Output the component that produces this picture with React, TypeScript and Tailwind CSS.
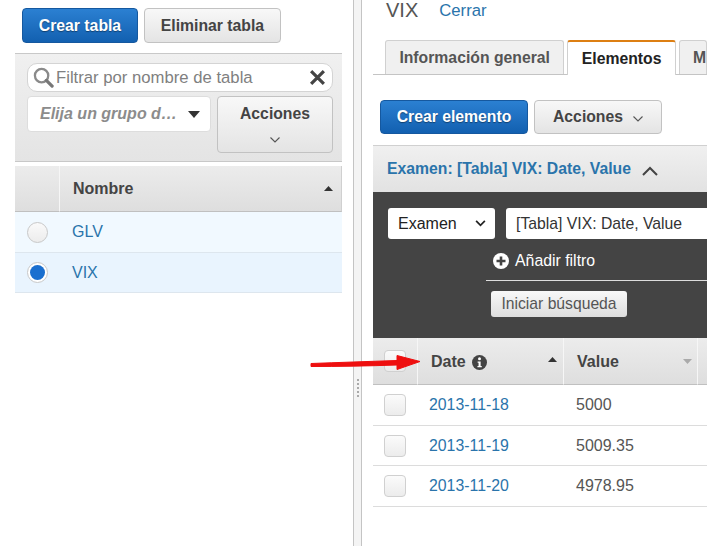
import React from "react";

function Chevron({ className = "" }: { className?: string }) {
  return (
    <svg viewBox="0 0 10 6" className={className} fill="none" stroke="currentColor" strokeWidth="1.1">
      <path d="M0.5 0.5 L5 5 L9.5 0.5" />
    </svg>
  );
}

function Caret({ down = false, color = "#333" }: { down?: boolean; color?: string }) {
  return (
    <svg viewBox="0 0 9 5" className="w-[9px] h-[5px]" fill={color}>
      <path d={down ? "M0 0 L9 0 L4.5 5 Z" : "M4.5 0 L9 5 L0 5 Z"} />
    </svg>
  );
}

const blueBtn =
  "rounded-[4px] border border-[#15589f] bg-gradient-to-b from-[#2b80d2] to-[#1260b0] text-white font-bold text-[15.75px] [text-shadow:0_1px_1px_rgba(0,0,0,0.4)] flex items-center justify-center";
const grayBtn =
  "rounded-[4px] border border-[#c2c2c2] bg-gradient-to-b from-[#f8f8f8] to-[#e4e4e4] text-[#444] font-bold text-[15.75px] flex items-center justify-center";
const headCell = "bg-gradient-to-b from-[#ececec] to-[#dedede] border-b border-[#c0c0c0] flex items-center";

function Box() {
  return <div className="w-[22px] h-[22px] rounded-[4px] border border-[#d0d0d0] bg-gradient-to-b from-[#fbfbfb] to-[#ececec]" />;
}

function Row({ date, value }: { date: string; value: string }) {
  return (
    <div className="h-[40.7px] border-b border-[#dcdcdc] flex items-center text-[16px]">
      <div className="w-[45px] pl-[11px] flex items-center"><Box /></div>
      <div className="w-[146px] pl-[11px] text-[15.85px] text-[#2a74ab]">{date}</div>
      <div className="pl-[12px] text-[#555]">{value}</div>
    </div>
  );
}

export default function App() {
  return (
    <div className="relative w-[707px] h-[546px] overflow-hidden bg-white flex font-['Liberation_Sans',Arial,sans-serif]">
      {/* Left */}
      <div className="w-[353px] shrink-0 pl-[15px] pr-[11px] pt-[8px]">
        <div className="flex gap-[6px] pl-[7px]">
          <button className={`${blueBtn} w-[116px] h-[35px]`}>Crear tabla</button>
          <button className={`${grayBtn} w-[137px] h-[35px]`}>Eliminar tabla</button>
        </div>
        <div className="mt-[10px] h-[109px] border-t border-b border-[#c8c8c8] bg-gradient-to-b from-[#f0f0f0] to-[#e4e4e4] pl-[12px] pr-[9px] pt-[9px]">
          <div className="h-[29px] rounded-[10px] border border-[#d4d4d4] bg-white flex items-center pl-[5px] pr-[6px]">
            <svg viewBox="0 0 22 22" className="w-[21px] h-[21px] shrink-0" fill="none">
              <circle cx="9" cy="9" r="7" stroke="#8a8a8a" strokeWidth="2.4" />
              <path d="M14 14 L20 20" stroke="#777" strokeWidth="3.4" strokeLinecap="round" />
            </svg>
            <span className="ml-[2px] text-[16.7px] text-[#808080] flex-1 whitespace-nowrap">Filtrar por nombre de tabla</span>
            <svg viewBox="0 0 16 16" className="w-[17px] h-[17px]" stroke="#444" strokeWidth="3" fill="none">
              <path d="M2 2 L14 14 M14 2 L2 14" />
            </svg>
          </div>
          <div className="mt-[4px] flex gap-[6px] items-start">
            <div className="w-[184px] h-[36px] rounded-[4px] border border-[#ddd] bg-white flex items-center pl-[12px] pr-[10px] justify-between">
              <span className="text-[16px] italic font-bold text-[#8c8c8c] whitespace-nowrap">Elija un grupo d…</span>
              <svg viewBox="0 0 12 7" className="w-[12px] h-[7px]" fill="#333"><path d="M0 0 H12 L6 7 Z" /></svg>
            </div>
            <div className={`${grayBtn} w-[116px] h-[57px] flex-col pb-[2px]`}>
              <span className="-mt-[2px]">Acciones</span>
              <Chevron className="w-[10px] h-[6px] mt-[11px] text-[#555]" />
            </div>
          </div>
        </div>
        <div className="mt-[4px] flex">
          <div className={`${headCell} h-[46px] w-[45px] border-r border-r-[#f6f6f6]`} />
          <div className={`${headCell} h-[46px] flex-1 pl-[13px] pr-[8px] justify-between border-r border-r-[#d0d0d0]`}>
            <span className="font-bold text-[16px] text-[#444]">Nombre</span>
            <Caret />
          </div>
        </div>
        <div className="h-[41px] bg-[#f1f9ff] border-b border-[#dde6ee] flex items-center text-[16px] text-[#2a74ab]">
          <div className="w-[45px] pl-[12px]">
            <div className="w-[21px] h-[21px] rounded-full border border-[#c8c8c8] bg-gradient-to-b from-[#fafafa] to-[#ececec]" />
          </div>
          <span className="pl-[12px] -mt-[1px]">GLV</span>
        </div>
        <div className="h-[40px] bg-[#e9f4fe] border-b border-[#dde6ee] flex items-center text-[16px] text-[#2a74ab]">
          <div className="w-[45px] pl-[12px]">
            <div className="w-[21px] h-[21px] rounded-full border border-[#c8c8c8] bg-white flex items-center justify-center">
              <div className="w-[15px] h-[15px] rounded-full bg-[#1a6fcf]" />
            </div>
          </div>
          <span className="pl-[12px]">VIX</span>
        </div>
      </div>

      {/* Splitter */}
      <div className="w-[9px] shrink-0 border-l border-r border-[#c4c4c4] bg-[#f4f4f4] flex flex-col items-center pt-[379px] gap-[2px]">
        {[0, 1, 2, 3, 4].map((i) => (
          <div key={i} className="w-[2px] h-[2px] bg-[#aaa]" />
        ))}
      </div>

      {/* Right */}
      <div className="flex-1 min-w-0 pl-[11px]">
        <div className="h-[41px] pl-[13px] flex items-start gap-[21px] -mt-[1px]">
          <span className="text-[20px] leading-[22px] text-[#555]">VIX</span>
          <span className="text-[16.7px] leading-[22px] mt-[1px] text-[#2a74ab]">Cerrar</span>
        </div>
        <div className="h-[35px] border-b border-[#c4c4c4] pl-[12px] flex items-end overflow-visible">
          <div className="w-[180px] h-[34px] rounded-t-[3px] border border-b-0 border-[#d0d0d0] bg-[#f0f0f0] flex items-center justify-center font-bold text-[15.75px] text-[#555] whitespace-nowrap">Información general</div>
          <div className="ml-[3px] w-[109px] h-[35px] -mb-[1px] rounded-t-[3px] border-x border-[#d0d0d0] border-t-2 border-t-[#dd7f13] bg-white flex items-center justify-center font-bold text-[15.75px] text-[#222]">Elementos</div>
          <div className="ml-[3px] flex-1 h-[34px] rounded-t-[3px] border border-b-0 border-[#d0d0d0] bg-[#f0f0f0] flex items-center pl-[13px] font-bold text-[15.75px] text-[#555]">M</div>
        </div>
        <div className="mt-[25px] pl-[7px] flex gap-[6px]">
          <button className={`${blueBtn} w-[148px] h-[34px]`}>Crear elemento</button>
          <button className={`${grayBtn} w-[128px] h-[34px] gap-[10px]`}>
            <span>Acciones</span>
            <Chevron className="w-[10px] h-[6px] mt-[3px] text-[#555]" />
          </button>
        </div>
        <div className="mt-[11px] h-[47px] border-t border-[#d0d0d0] bg-gradient-to-b from-[#f0f0f0] to-[#e2e2e2] pl-[14px] flex items-center gap-[11px]">
          <span className="font-bold text-[15.75px] text-[#2a74ab] whitespace-nowrap">Examen: [Tabla] VIX: Date, Value</span>
          <svg viewBox="0 0 16 10" className="w-[16px] h-[10px] mt-[4px]" fill="none" stroke="#444" strokeWidth="2"><path d="M1 9 L8 2 L15 9" /></svg>
        </div>
        <div className="h-[146px] bg-[#444444] pt-[16px]">
          <div className="flex pl-[15px] gap-[11px]">
            <div className="w-[107px] h-[31px] rounded-[3px] bg-white flex items-center justify-between pl-[10px] pr-[9px] text-[16px] text-[#222]">
              <span>Examen</span>
              <svg viewBox="0 0 12 8" className="w-[11px] h-[7px]" fill="none" stroke="#222" strokeWidth="2"><path d="M1 1 L6 6 L11 1" /></svg>
            </div>
            <div className="flex-1 h-[31px] rounded-l-[3px] bg-white flex items-center pl-[10px] text-[15.75px] text-[#333] whitespace-nowrap">[Tabla] VIX: Date, Value</div>
          </div>
          <div className="ml-[113px] h-[42px] border-b border-[#ddd] flex items-center pl-[7px] gap-[6px] text-white text-[15.85px]">
            <svg viewBox="0 0 16 16" className="w-[16px] h-[16px] mt-[3px]">
              <circle cx="8" cy="8" r="8" fill="#fff" />
              <path d="M8 3.5 V12.5 M3.5 8 H12.5" stroke="#444" strokeWidth="2.6" />
            </svg>
            <span className="mt-[3px]">Añadir filtro</span>
          </div>
          <div className="mt-[10px] ml-[118px] w-[136px] h-[26px] rounded-[3px] bg-gradient-to-b from-[#f8f8f8] to-[#dedede] flex items-center justify-center text-[15.7px] text-[#555]">Iniciar búsqueda</div>
        </div>
        <div className="flex">
          <div className={`${headCell} h-[47px] w-[45px] pl-[11px] border-r border-r-[#f6f6f6]`}><Box /></div>
          <div className={`${headCell} h-[47px] w-[146px] pl-[13px] pr-[6px] border-r border-r-[#f6f6f6]`}>
            <span className="font-bold text-[16px] text-[#444] mt-[1px]">Date</span>
            <svg viewBox="0 0 16 16" className="w-[15px] h-[15px] ml-[6px] mt-[3px]">
              <circle cx="8" cy="8" r="8" fill="#444" />
              <circle cx="8" cy="4" r="1.6" fill="#fff" />
              <path d="M6 7 H9.2 V11.6 H10.4 V13 H5.8 V11.6 H7 V8.3 H6 Z" fill="#fff" />
            </svg>
            <span className="ml-auto -mt-[3px]"><Caret /></span>
          </div>
          <div className={`${headCell} h-[47px] w-[134px] pl-[13px] pr-[5px] justify-between border-r border-r-[#f6f6f6]`}>
            <span className="font-bold text-[16px] text-[#444] mt-[1px]">Value</span>
            <Caret down color="#aaa" />
          </div>
          <div className={`${headCell} h-[47px] flex-1`} />
        </div>
        <Row date="2013-11-18" value="5000" />
        <Row date="2013-11-19" value="5009.35" />
        <Row date="2013-11-20" value="4978.95" />
      </div>

      {/* Annotation arrow */}
      <svg className="absolute left-[308px] top-[352px] w-[114px] h-[22px]" viewBox="0 0 114 22">
        <path d="M3 11.5 C30 10.5 60 9.5 89 8.5 L89 3.5 L112 9.5 L89 17.5 L89 13 C60 14 30 14.5 3 14.5 Z" fill="#ee0f0f" stroke="#ee0f0f" strokeWidth="1" strokeLinejoin="round" />
      </svg>
    </div>
  );
}
